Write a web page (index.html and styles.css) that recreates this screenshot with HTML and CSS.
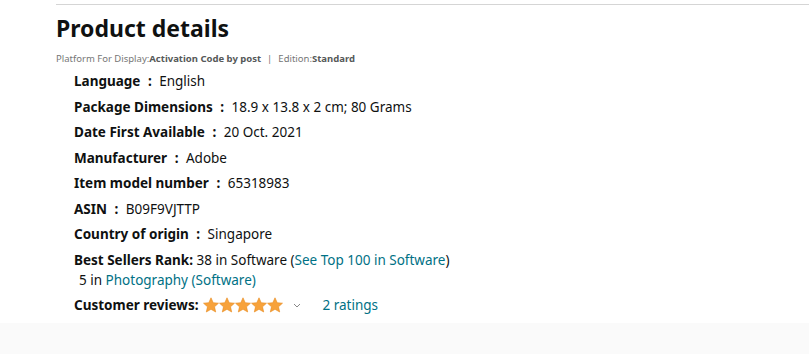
FILE: index.html
```html
<!DOCTYPE html>
<html lang="en">
<head>
    <meta charset="UTF-8">
    <title>Product details</title>
    <link rel="stylesheet" href="styles.css">
</head>
<body>
    <div class="page">
        <div class="details">
            <h2>Product details</h2>
            <p class="variation">Platform For Display:<b>Activation Code by post</b><span class="sep">|</span>Edition:<b>Standard</b></p>
            <ul class="bullets">
                <li><b>Language <span class="colon">:</span></b> English</li>
                <li><b>Package Dimensions <span class="colon">:</span></b> 18.9 x 13.8 x 2 cm; 80 Grams</li>
                <li><b>Date First Available <span class="colon">:</span></b> 20 Oct. 2021</li>
                <li><b>Manufacturer <span class="colon">:</span></b> Adobe</li>
                <li><b>Item model number <span class="colon">:</span></b> 65318983</li>
                <li><b>ASIN <span class="colon">:</span></b> B09F9VJTTP</li>
                <li><b>Country of origin <span class="colon">:</span></b> Singapore</li>
                <li class="rank"><b>Best Sellers Rank:</b> 38 in Software (<a href="#">See Top 100 in Software</a>)
                    <div class="sub-rank">5 in <a href="#">Photography (Software)</a></div>
                </li>
                <li class="reviews"><b>Customer reviews:</b>
                    <span class="stars">
                        <svg viewBox="0 0 16 16" width="16" height="16"><path d="M8 .8l2.2 4.9 5.3.5-4 3.6 1.2 5.2L8 12.3 3.3 15l1.2-5.2-4-3.6 5.3-.5z"/></svg>
                        <svg viewBox="0 0 16 16" width="16" height="16"><path d="M8 .8l2.2 4.9 5.3.5-4 3.6 1.2 5.2L8 12.3 3.3 15l1.2-5.2-4-3.6 5.3-.5z"/></svg>
                        <svg viewBox="0 0 16 16" width="16" height="16"><path d="M8 .8l2.2 4.9 5.3.5-4 3.6 1.2 5.2L8 12.3 3.3 15l1.2-5.2-4-3.6 5.3-.5z"/></svg>
                        <svg viewBox="0 0 16 16" width="16" height="16"><path d="M8 .8l2.2 4.9 5.3.5-4 3.6 1.2 5.2L8 12.3 3.3 15l1.2-5.2-4-3.6 5.3-.5z"/></svg>
                        <svg viewBox="0 0 16 16" width="16" height="16"><path d="M8 .8l2.2 4.9 5.3.5-4 3.6 1.2 5.2L8 12.3 3.3 15l1.2-5.2-4-3.6 5.3-.5z"/></svg>
                    </span>
                    <svg class="caret" viewBox="0 0 8 5" width="8" height="5"><path d="M1 1l3 3 3-3" fill="none" stroke="#888" stroke-width="1"/></svg>
                    <a href="#" class="ratings">2 ratings</a>
                </li>
            </ul>
        </div>
    </div>
</body>
</html>
```

FILE: styles.css
```css
*{
    box-sizing: border-box;
}

body{
    margin:0;
    background-color:#fafafa;
    font-family: "Noto Sans", "Open Sans", sans-serif;
    color:#0f1111;
}

.page{
    background-color:#fff;
    padding:4px 0 0 56px;
    height:323px;
    box-shadow:0 2px 3px rgba(0,0,0,0.06);
}

.details{
    border-top:1px solid #d5d5d5;
    padding-top:8px;
}

h2{
    margin:0;
    font-size:23px;
    line-height:30px;
    font-weight:700;
}

.variation{
    margin:9px 0 5px;
    font-size:9.5px;
    color:#767676;
    line-height:14px;
}

.variation b{
    color:#565959;
}

.sep{
    margin:0 6px;
}

.bullets{
    list-style:none;
    margin:0;
    padding:0 0 0 18px;
    font-size:13.5px;
    line-height:20px;
}

.bullets li{
    margin-bottom:5.5px;
}

.colon{
    margin:0 4px;
}

a{
    color:#007185;
    text-decoration:none;
}

.rank{
    margin-bottom:4px;
}

.sub-rank{
    padding-left:5px;
}

.reviews{
    display:flex;
    align-items:center;
}

.stars{
    display:inline-flex;
    margin-left:4px;
}

.stars svg{
    fill:#f7a23b;
    stroke:#e88a1c;
    stroke-width:.6;
}

.caret{
    margin-left:10px;
}

.ratings{
    margin-left:22px;
}
```
